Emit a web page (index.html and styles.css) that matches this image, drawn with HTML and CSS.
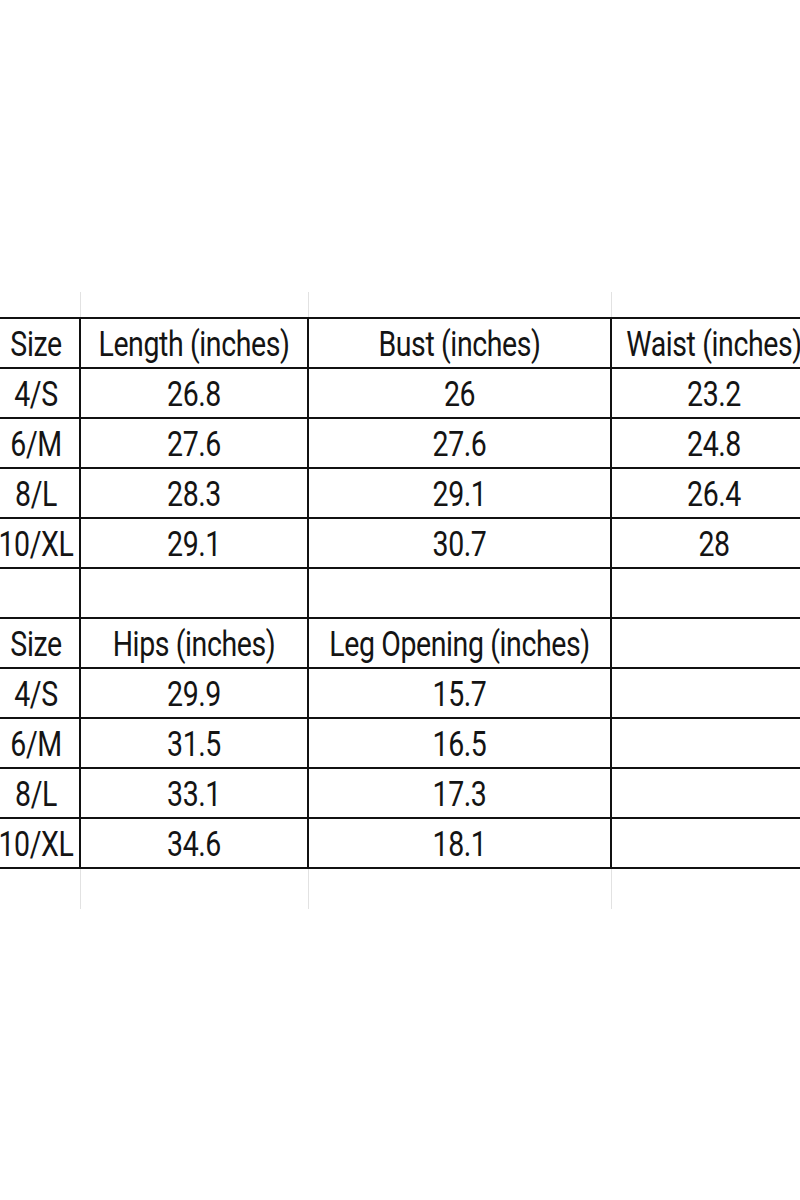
FILE: index.html
```
<!DOCTYPE html>
<html>
<head>
<meta charset="utf-8">
<link rel="stylesheet" href="styles.css">
</head>
<body>
<div class="page">
  <table class="chart">
    <colgroup>
      <col class="c1"><col class="c2"><col class="c3"><col class="c4">
    </colgroup>
    <tr class="ghost top"><td></td><td></td><td></td><td></td></tr>
    <tr><td><span class="t">Size</span></td><td><span class="t">Length (inches)</span></td><td><span class="t">Bust (inches)</span></td><td><span class="t">Waist (inches)</span></td></tr>
    <tr><td><span class="t">4/S</span></td><td><span class="t">26.8</span></td><td><span class="t">26</span></td><td><span class="t">23.2</span></td></tr>
    <tr><td><span class="t">6/M</span></td><td><span class="t">27.6</span></td><td><span class="t">27.6</span></td><td><span class="t">24.8</span></td></tr>
    <tr><td><span class="t">8/L</span></td><td><span class="t">28.3</span></td><td><span class="t">29.1</span></td><td><span class="t">26.4</span></td></tr>
    <tr><td><span class="t">10/XL</span></td><td><span class="t">29.1</span></td><td><span class="t">30.7</span></td><td><span class="t">28</span></td></tr>
    <tr><td></td><td></td><td></td><td></td></tr>
    <tr><td><span class="t">Size</span></td><td><span class="t">Hips (inches)</span></td><td><span class="t">Leg Opening (inches)</span></td><td></td></tr>
    <tr><td><span class="t">4/S</span></td><td><span class="t">29.9</span></td><td><span class="t">15.7</span></td><td></td></tr>
    <tr><td><span class="t">6/M</span></td><td><span class="t">31.5</span></td><td><span class="t">16.5</span></td><td></td></tr>
    <tr><td><span class="t">8/L</span></td><td><span class="t">33.1</span></td><td><span class="t">17.3</span></td><td></td></tr>
    <tr><td><span class="t">10/XL</span></td><td><span class="t">34.6</span></td><td><span class="t">18.1</span></td><td></td></tr>
    <tr class="ghost bottom"><td></td><td></td><td></td><td></td></tr>
  </table>
</div>
</body>
</html>
```
FILE: styles.css
```
html, body {
  margin: 0;
  padding: 0;
  background: #fff;
}
.page {
  width: 800px;
  height: 1200px;
  overflow: hidden;
  padding-top: 292px;
  box-sizing: border-box;
}
.chart {
  border-collapse: collapse;
  table-layout: fixed;
  width: 825px;
  margin-left: -9px;
  font-family: Roboto, "Liberation Sans", sans-serif;
  font-size: 28.5px;
  letter-spacing: -0.4px;
  color: #141414;
}
.c1 { width: 88px; }
.c2 { width: 228px; }
.c3 { width: 303px; }
.c4 { width: 206px; }
.chart td {
  border: 2px solid #111;
  height: 48px;
  padding: 0;
  text-align: center;
  vertical-align: middle;
  white-space: nowrap;
  line-height: 48px;
}
.chart .ghost td {
  border-top: none;
  border-bottom: none;
  border-left: 1px solid #e2e2e2;
  border-right: 1px solid #e2e2e2;
}
.chart .ghost.top td { height: 25px; }
.chart .ghost.bottom td { height: 40px; }
.t {
  display: inline-block;
  transform: translateY(3px) scaleY(1.26);
  transform-origin: center 62%;
}
```
